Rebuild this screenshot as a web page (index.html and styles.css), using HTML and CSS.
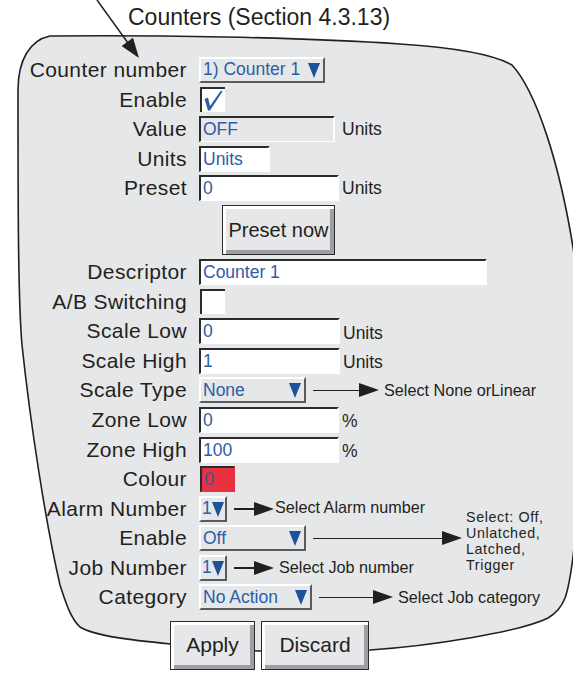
FILE: index.html
```html
<!DOCTYPE html>
<html>
<head>
<meta charset="utf-8">
<title>Counters</title>
<link rel="stylesheet" href="styles.css">
</head>
<body>

<div class="sheet">

  <!-- outline of the screen and the pointer from the heading -->
  <svg class="outline" width="573" height="676" viewBox="0 0 573 676">
    <path class="blob" d="M50,36 C150,35 300,37 400,44 C460,48 495,55 512,65 C535,90 560,160 575,260 C585,350 582,480 573,557 C568,595 565,608 548,618 C520,632 430,646 370,650 L258,651 L171,644 C130,640 95,636 80,627 C70,618 65,600 60,585 C45,520 30,420 22,345 C18,300 18,200 18,90 C18,60 30,40 50,36 Z"/>
    <line x1="97" y1="0" x2="128" y2="43" stroke="#231f20" stroke-width="1.5"/>
    <polygon points="139,58 121.6,45.9 133,37.7" fill="#231f20"/>
  </svg>

  <h1 class="title">Counters (Section 4.3.13)</h1>

  <div class="form">
    <div class="row">
      <span class="lbl">Counter number</span>
      <div class="ctl"><span class="drop w126">1) Counter 1<i class="tri"></i></span></div>
    </div>
    <div class="row">
      <span class="lbl">Enable</span>
      <div class="ctl">
        <span class="check">
          <svg width="22" height="23" viewBox="0 0 22 23"><path d="M2.5,10 L6,8.5 L8,17 L19,1.5 L20.5,2.5 L8,21.5 L6,21.5 Z" fill="#2c5ea6"/></svg>
        </span>
      </div>
    </div>
    <div class="row">
      <span class="lbl">Value</span>
      <div class="ctl"><span class="fld grey w136">OFF</span><span class="unit gap7">Units</span></div>
    </div>
    <div class="row">
      <span class="lbl">Units</span>
      <div class="ctl"><span class="fld w71">Units</span></div>
    </div>
    <div class="row">
      <span class="lbl">Preset</span>
      <div class="ctl"><span class="fld w140">0</span><span class="unit">Units</span></div>
    </div>

    <div class="btn-row"><button class="btn preset">Preset now</button></div>

    <div class="row">
      <span class="lbl">Descriptor</span>
      <div class="ctl"><span class="fld w288">Counter 1</span></div>
    </div>
    <div class="row">
      <span class="lbl">A/B Switching</span>
      <div class="ctl"><span class="check"></span></div>
    </div>
    <div class="row">
      <span class="lbl">Scale Low</span>
      <div class="ctl"><span class="fld w141">0</span><span class="unit low">Units</span></div>
    </div>
    <div class="row">
      <span class="lbl">Scale High</span>
      <div class="ctl"><span class="fld w141">1</span><span class="unit low">Units</span></div>
    </div>
    <div class="row">
      <span class="lbl">Scale Type</span>
      <div class="ctl">
        <span class="drop w107">None<i class="tri"></i></span>
        <span class="arrow a66"><b></b><i></i></span>
        <span class="note">Select None orLinear</span>
      </div>
    </div>
    <div class="row">
      <span class="lbl">Zone Low</span>
      <div class="ctl"><span class="fld w140">0</span><span class="unit low">%</span></div>
    </div>
    <div class="row">
      <span class="lbl">Zone High</span>
      <div class="ctl"><span class="fld w140">100</span><span class="unit low">%</span></div>
    </div>
    <div class="row">
      <span class="lbl">Colour</span>
      <div class="ctl"><span class="fld swatch">0</span></div>
    </div>
    <div class="row">
      <span class="lbl">Alarm Number</span>
      <div class="ctl">
        <span class="drop w28">1<i class="tri"></i></span>
        <span class="arrow a40"><b></b><i></i></span>
        <span class="note tight">Select Alarm number</span>
      </div>
    </div>
    <div class="row">
      <span class="lbl">Enable</span>
      <div class="ctl">
        <span class="drop w107">Off<i class="tri"></i></span>
        <span class="arrow a149"><b></b><i></i></span>
        <span class="note stack"><span>Select: Off,</span><span>Unlatched,</span><span>Latched,</span><span>Trigger</span></span>
      </div>
    </div>
    <div class="row">
      <span class="lbl">Job Number</span>
      <div class="ctl">
        <span class="drop w28">1<i class="tri"></i></span>
        <span class="arrow a40"><b></b><i></i></span>
        <span class="note">Select Job number</span>
      </div>
    </div>
    <div class="row">
      <span class="lbl">Category</span>
      <div class="ctl">
        <span class="drop w112">No Action<i class="tri"></i></span>
        <span class="arrow a74"><b></b><i></i></span>
        <span class="note">Select Job category</span>
      </div>
    </div>
  </div>

  <div class="actions">
    <button class="btn apply">Apply</button>
    <button class="btn discard">Discard</button>
  </div>

</div>

</body>
</html>
```

FILE: styles.css
```css
body{
  margin:0;
  background:#ffffff;
  font-family:"Liberation Sans",Arial,sans-serif;
  color:#231f20;
}

.sheet{
  position:relative;
  width:573px;
  height:676px;
  overflow:hidden;
}

svg.outline{
  position:absolute;
  left:0;
  top:0;
  z-index:0;
}

.blob{
  fill:#e6e7e8;
  stroke:#231f20;
  stroke-width:1.6;
}

.title{
  position:relative;
  margin:0;
  height:54.2px;
  padding:1px 0 0 128px;
  font-size:23px;
  font-weight:normal;
  line-height:32px;
}

.form{
  position:relative;
}

.row{
  position:relative;
  display:flex;
  align-items:center;
  height:29.6px;
}

.lbl{
  width:187px;
  text-align:right;
  font-size:21px;
  letter-spacing:0.4px;
  line-height:24px;
  white-space:nowrap;
}

.ctl{
  display:flex;
  align-items:center;
  margin-left:12px;
  height:100%;
}

/* fields */
.fld{
  box-sizing:border-box;
  display:flex;
  align-items:center;
  height:26px;
  padding:0 0 0 2px;
  background:#ffffff;
  border-style:solid;
  border-width:2px 2px 1px 2px;
  border-color:#2b2b2b #ffffff #ffffff #2b2b2b;
  color:#2c5ea6;
  font-size:17.5px;
  white-space:nowrap;
}

.fld.grey{
  background:#e6e7e8;
}

.fld.swatch{
  width:35px;
  margin-left:1px;
  background:#e8303f;
  border-color:#2b2b2b #e8303f #e8303f #2b2b2b;
}

.w71{ width:71px; }
.w136{ width:136px; }
.w140{ width:140px; }
.w141{ width:141px; }
.w288{ width:288px; }

.unit{
  margin-left:3px;
  font-size:17.5px;
}

.unit.gap7{ margin-left:7px; }
.unit.low{ padding-top:4px; }

/* drop-down lists */
.drop{
  box-sizing:border-box;
  display:flex;
  align-items:center;
  justify-content:space-between;
  height:26px;
  padding:0 3px 0 2px;
  background:#e6e7e8;
  border-style:solid;
  border-width:2px;
  border-color:#ffffff #5a5a5a #5a5a5a #ffffff;
  color:#2c5ea6;
  font-size:17.5px;
  white-space:nowrap;
}

.w28{ width:28px; padding:0 1px 0 1px; }
.w107{ width:107px; }
.w112{ width:113px; }
.w126{ width:126px; }

.tri{
  display:block;
  width:0;
  height:0;
  border-left:6px solid transparent;
  border-right:6px solid transparent;
  border-top:15px solid #1f5199;
  margin-top:1px;
}

/* check boxes */
.check{
  box-sizing:border-box;
  display:flex;
  align-items:flex-end;
  width:25px;
  height:25px;
  margin-left:1px;
  background:#ffffff;
  border-top:2px solid #2b2b2b;
  border-left:2px solid #2b2b2b;
}

/* annotation arrows */
.arrow{
  display:flex;
  align-items:center;
  margin-left:7px;
}

.arrow b{
  flex:1;
  height:1.6px;
  background:#231f20;
}

.arrow i{
  width:0;
  height:0;
  border-left:20px solid #231f20;
  border-top:7px solid transparent;
  border-bottom:7px solid transparent;
}

.a40{ width:40px; }
.a66{ width:66px; }
.a74{ width:74px; }
.a149{ width:149px; }

.note{
  margin-left:5px;
  font-size:16.2px;
  white-space:nowrap;
}

.note.tight{ margin-left:1px; margin-top:-3px; }

.note.stack{
  position:absolute;
  left:466px;
  top:-15px;
  display:flex;
  flex-direction:column;
  margin:0;
  font-size:14.3px;
  letter-spacing:0.6px;
  line-height:16px;
}

.note.stack span{
  height:16px;
}

/* buttons */
.btn{
  box-sizing:border-box;
  height:49px;
  padding:0;
  background:#e6e7e8;
  border:1px solid #2b2b2b;
  border-radius:0;
  box-shadow:inset 3px 3px 0 #ffffff, inset -4px -4px 0 #9d9fa2;
  font-family:"Liberation Sans",Arial,sans-serif;
  font-size:21px;
  color:#231f20;
}

.btn-row{
  display:flex;
  height:50px;
  margin:2px 0;
  padding-left:222px;
}

.btn.preset{
  width:113px;
  height:50px;
  font-size:20px;
}

.actions{
  position:relative;
  display:flex;
  gap:6px;
  margin-top:8.6px;
  padding-left:170px;
}

.btn.apply{ width:85px; }
.btn.discard{ width:108px; }
```
